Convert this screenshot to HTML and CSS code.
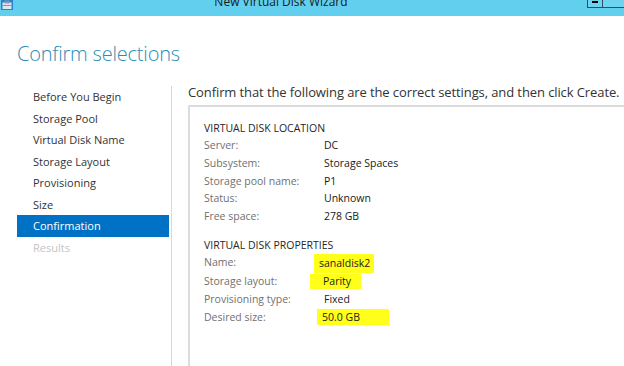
FILE: index.html
```html
<!DOCTYPE html>
<html>
<head>
<meta charset="utf-8">
<title>New Virtual Disk Wizard</title>
<link rel="stylesheet" href="styles.css">
</head>
<body>
<div class="titlebar">
  <svg class="app-icon" width="12" height="10" viewBox="0 0 12 10">
    <rect x="0" y="0" width="12" height="10" fill="#2f7fd0"/>
    <rect x="1.5" y="2.5" width="9" height="6.5" fill="#dde6ee"/>
    <rect x="4" y="1" width="4" height="2" fill="none" stroke="#8a99a8" stroke-width="1"/>
    <rect x="1.5" y="5" width="9" height="1" fill="#8a99a8"/>
  </svg>
  <div class="title">New Virtual Disk Wizard</div>
  <div class="winbtns">
    <div class="winbtn min"><span class="dash"></span></div>
    <div class="winbtn max"></div>
  </div>
</div>

<h1 class="heading">Confirm selections</h1>

<div class="wizard">
  <ul class="steps">
    <li>Before You Begin</li>
    <li>Storage Pool</li>
    <li>Virtual Disk Name</li>
    <li>Storage Layout</li>
    <li>Provisioning</li>
    <li>Size</li>
    <li class="current">Confirmation</li>
    <li class="disabled">Results</li>
  </ul>
  <div class="sep"></div>
  <div class="content">
    <p class="intro">Confirm that the following are the correct settings, and then click Create.</p>
    <div class="summary">
      <div class="group-title">VIRTUAL DISK LOCATION</div>
      <dl class="props">
        <dt>Server:</dt><dd>DC</dd>
        <dt>Subsystem:</dt><dd>Storage Spaces</dd>
        <dt>Storage pool name:</dt><dd>P1</dd>
        <dt>Status:</dt><dd>Unknown</dd>
        <dt>Free space:</dt><dd>278 GB</dd>
      </dl>
      <div class="group-title second">VIRTUAL DISK PROPERTIES</div>
      <dl class="props">
        <dt>Name:</dt><dd><span class="mark mark-name">sanaldisk2</span></dd>
        <dt>Storage layout:</dt><dd><span class="mark mark-layout">Parity</span></dd>
        <dt>Provisioning type:</dt><dd>Fixed</dd>
        <dt>Desired size:</dt><dd><span class="mark mark-size">50.0 GB</span></dd>
      </dl>
    </div>
  </div>
</div>
</body>
</html>
```

FILE: styles.css
```css
html, body {
  margin: 0;
  padding: 0;
  background: white;
  overflow: hidden;
}

body {
  font-family: "Open Sans", "Noto Sans", sans-serif;
  color: #262626;
  width: 624px;
  height: 366px;
  display: flex;
  flex-direction: column;
}

.titlebar {
  flex: none;
  height: 15px;
  background: #63cfee;
  border-bottom: 1px solid #7fc3dc;
  display: flex;
  align-items: flex-start;
  overflow: hidden;
}

.app-icon {
  display: block;
  flex: none;
  margin-left: 1px;
}

.title {
  flex: 1;
  text-align: center;
  font-size: 12px;
  line-height: 15px;
  margin-top: -6px;
  padding-right: 38px;
  color: #1a1a1a;
  white-space: nowrap;
}

.winbtns {
  flex: none;
  width: 37px;
  display: flex;
  overflow: hidden;
  margin-top: -6px;
}

.winbtn {
  flex: none;
  height: 12px;
  border: 1px solid #2b4f63;
  background: #6dd3ef;
  position: relative;
}

.winbtn.min {
  width: 14px;
}

.winbtn.max {
  width: 28px;
  margin-left: -1px;
}

.dash {
  position: absolute;
  left: 4px;
  top: 6px;
  width: 6px;
  height: 2px;
  background: #000;
}

.heading {
  flex: none;
  margin: 0;
  padding: 24px 0 0 17px;
  height: 48px;
  box-sizing: border-box;
  font-size: 20px;
  font-weight: 300;
  color: #2b8db6;
  letter-spacing: -0.2px;
}

.wizard {
  flex: 1;
  min-height: 0;
  display: flex;
  margin-top: 22px;
}

.steps {
  list-style: none;
  margin: 0;
  padding: 0 0 0 17px;
  width: 152px;
  font-size: 11px;
}

.steps li {
  height: 21.5px;
  line-height: 21.5px;
  padding-left: 16px;
  color: #333;
}

.steps li.current {
  background: #0072c6;
  color: white;
}

.steps li.disabled {
  color: #c4c4c4;
}

.sep {
  width: 1px;
  background: #d8d8d8;
  margin-left: 2px;
}

.content {
  flex: 1;
  padding-left: 16px;
  min-width: 0;
  display: flex;
  flex-direction: column;
}

.intro {
  margin: -1px 0 0 0;
  font-size: 13px;
  line-height: 14px;
  white-space: nowrap;
  color: #333;
  letter-spacing: -0.1px;
}

.summary {
  flex: 1;
  margin-top: 6px;
  border-top: 2px solid #dcdcdc;
  border-left: 2px solid #dcdcdc;
  padding: 12px 0 0 14px;
  font-size: 10.5px;
}

.group-title {
  line-height: 18px;
  color: #262626;
}

.group-title.second {
  margin-top: 10px;
}

.props {
  display: grid;
  grid-template-columns: 120px auto;
  margin: 0;
  line-height: 17.8px;
}

.props dt {
  color: #707070;
}

.props dd {
  margin: 0;
  color: #1a1a1a;
}

.mark {
  background: #ffff1a;
  display: inline-block;
  line-height: 15px;
}

.mark-name {
  padding: 2px 4px 2px 5px;
  margin-left: -10px;
}

.mark-layout {
  padding: 0 10px 0 13px;
  margin-left: -14px;
}

.mark-size {
  padding: 1px 29px 0 5px;
  margin-left: -7px;
}
```
